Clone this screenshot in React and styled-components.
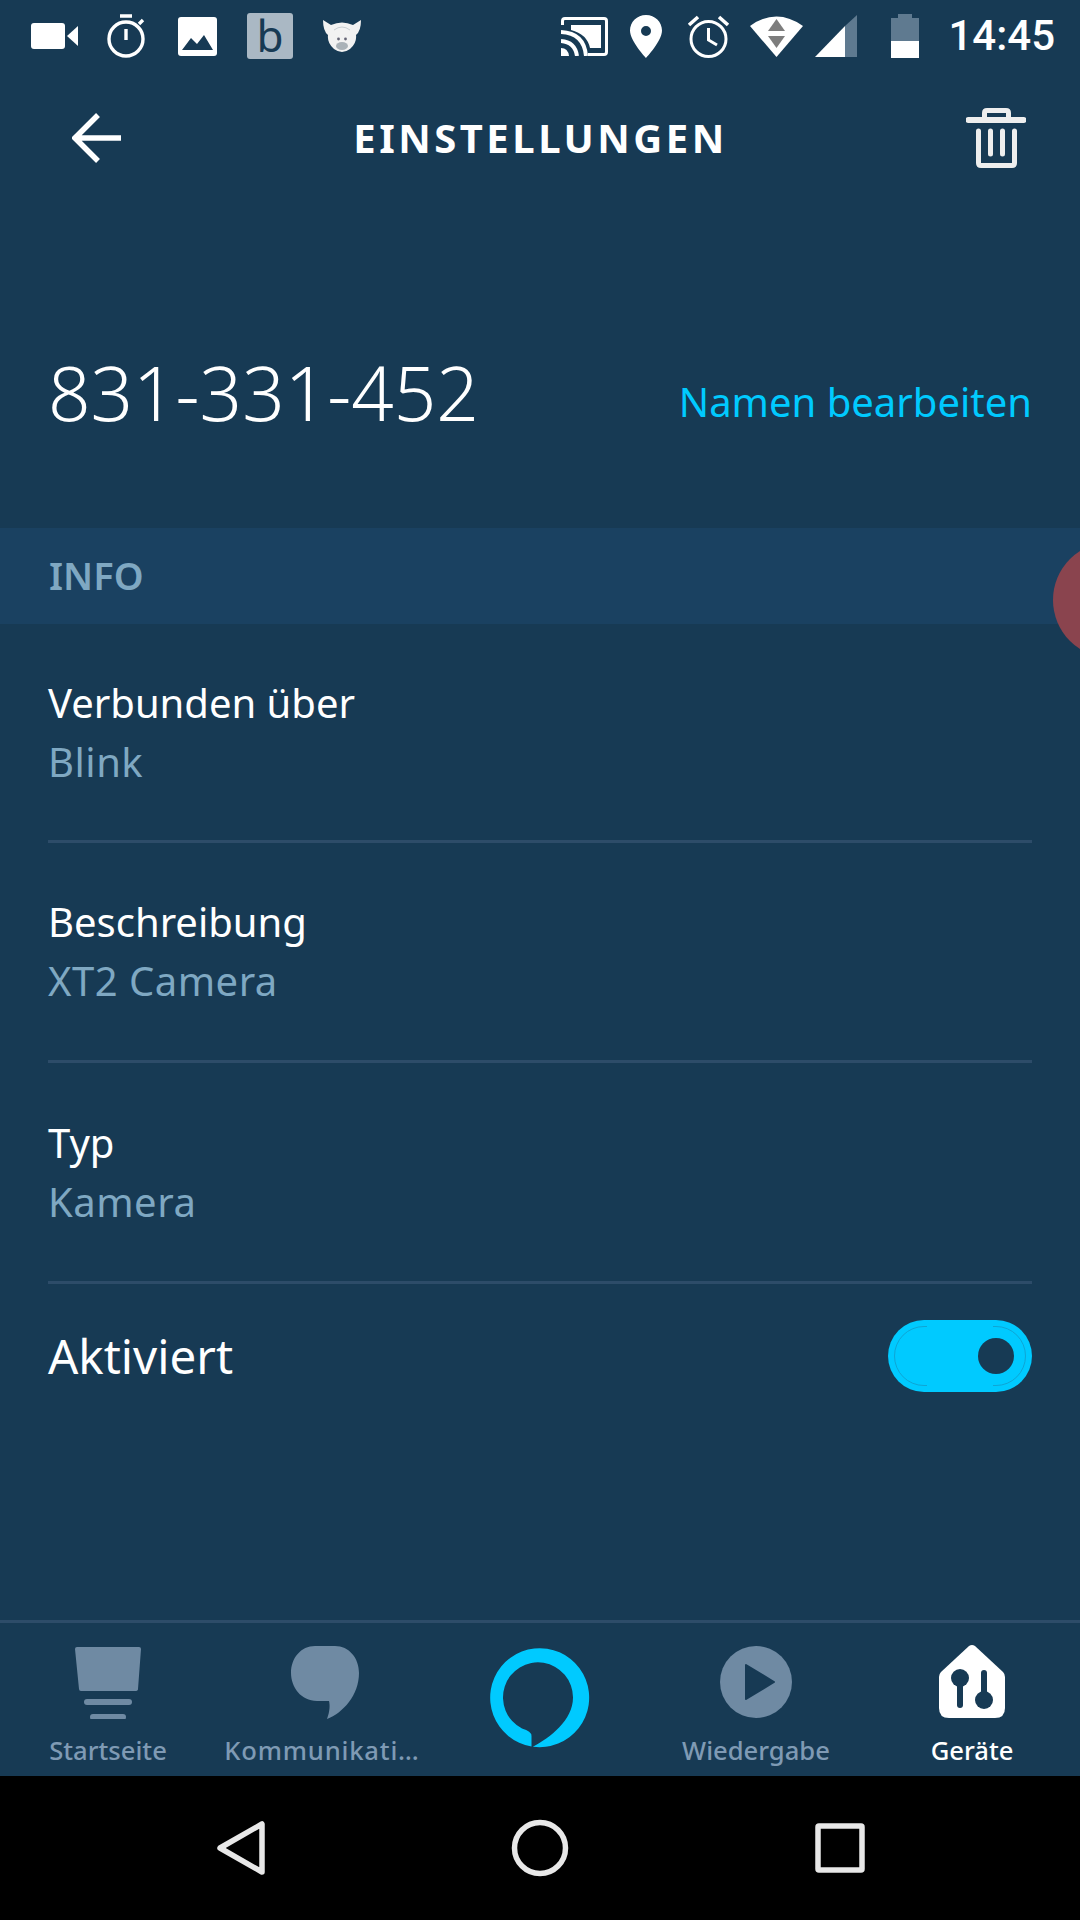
import React from 'react'
import styled, { createGlobalStyle } from 'styled-components'

const Global = createGlobalStyle`
  html, body { margin: 0; padding: 0; background: #173a54; }
  * { box-sizing: border-box; }
`;

const Screen = styled.div`
  position: relative;
  width: 1080px;
  height: 1920px;
  overflow: hidden;
  display: flex;
  flex-direction: column;
  background: #173a54;
  font-family: "Noto Sans", "Open Sans", sans-serif;
  color: #fff;
`;

const StatusBar = styled.div`
  height: 72px;
  flex: none;
  display: flex;
  align-items: center;
  justify-content: space-between;
  padding: 0 25px 0 31px;
`;

const StatusGroup = styled.div`
  display: flex;
  align-items: center;
`;

const StatusIcon = styled.svg`
  display: block;
  flex: none;
  width: ${p => p.$w}px;
  height: ${p => p.$h}px;
  margin-left: ${p => p.$ml || 0}px;
`;

const BadgeB = styled.span`
  flex: none;
  width: 46px;
  height: 46px;
  margin-left: 30px;
  border-radius: 3px;
  background: #aab8c4;
  color: #173a54;
  font-size: 44px;
  line-height: 44px;
  text-align: center;
`;

const Clock = styled.span`
  font-family: Roboto, sans-serif;
  font-size: 42px;
  font-weight: 500;
  margin-left: 29px;
  line-height: 1;
`;

const Toolbar = styled.header`
  height: 132px;
  flex: none;
  display: flex;
  align-items: center;
  justify-content: space-between;
  padding: 0 54px 0 72px;
`;

const Title = styled.h1`
  margin: 0 7px 2px 0;
  font-size: 40px;
  font-weight: 700;
  letter-spacing: 3.5px;
`;

const NameRow = styled.div`
  height: 324px;
  flex: none;
  display: flex;
  align-items: center;
  justify-content: space-between;
  padding: 51px 48px 0;
`;

const DeviceName = styled.div`
  font-size: 74.5px;
  font-weight: 300;
`;

const EditLink = styled.a`
  font-size: 40px;
  color: #00caff;
  margin-top: 19px;
`;

const SectionHead = styled.div`
  height: 96px;
  flex: none;
  display: flex;
  align-items: center;
  padding: 0 0 2px 49px;
  background: #1a4161;
  color: #7fa8c2;
  font-size: 38px;
  font-weight: 600;
`;

const InfoRow = styled.div`
  margin: 0 48px;
  height: ${p => p.$h}px;
  flex: none;
  display: flex;
  flex-direction: column;
  justify-content: center;
  border-bottom: 3px solid #2d4c69;
  padding-bottom: 1px;
`;

const Label = styled.div`
  font-size: 40px;
  line-height: 59px;
`;

const Value = styled.div`
  font-size: 40px;
  line-height: 59px;
  letter-spacing: 0.5px;
  color: #7fa8c2;
`;

const ToggleRow = styled.div`
  margin: 0 48px;
  height: 144px;
  flex: none;
  display: flex;
  align-items: center;
  justify-content: space-between;
`;

const ToggleLabel = styled.div`
  font-size: 47.5px;
  margin-bottom: 2px;
`;

const Toggle = styled.div`
  position: relative;
  width: 144px;
  height: 72px;
  border-radius: 36px;
  background: #00caff;
  &::before {
    content: '';
    position: absolute;
    inset: 6px;
    border-radius: 30px;
    border: 1px solid #0fa5d4;
    clip-path: polygon(0 0, 25% 0, 25% 100%, 75% 100%, 75% 0, 100% 0, 100% 100%, 0 100%);
  }
`;

const Knob = styled.span`
  position: absolute;
  right: 18px;
  top: 18px;
  width: 36px;
  height: 36px;
  border-radius: 50%;
  background: #173a54;
`;

const Spacer = styled.div`
  flex: 1;
`;

const TabBar = styled.nav`
  height: 156px;
  flex: none;
  display: grid;
  grid-template-columns: repeat(5, 1fr);
  border-top: 3px solid #2d4c69;
`;

const Tab = styled.div`
  display: flex;
  flex-direction: column;
  align-items: center;
  padding-top: ${p => (p.$center ? 17 : 22)}px;
  color: ${p => (p.$active ? '#fff' : '#7f9ab4')};
  font-size: 25.6px;
  font-weight: 500;
  white-space: nowrap;
`;

const TabIcon = styled.svg`
  display: block;
  width: 72px;
  height: 74px;
  flex: none;
`;

const AlexaIcon = styled.svg`
  display: block;
  width: 120px;
  height: 120px;
`;

const TabLabel = styled.span`
  line-height: 36px;
  margin-top: 14px;
  margin-right: ${p => (p.$spaced ? 4 : 0)}px;
  letter-spacing: ${p => (p.$spaced ? 0.8 : 0)}px;
`;

const NavBar = styled.div`
  height: 144px;
  flex: none;
  background: #000;
  display: flex;
  align-items: center;
  justify-content: center;
  gap: 236px;
`;

const NavIcon = styled.svg`
  display: block;
  width: 64px;
  height: 64px;
  fill: none;
  stroke: #e8e8e8;
  stroke-width: 5.5;
  stroke-linejoin: round;
`;

const RecordDot = styled.div`
  position: absolute;
  left: 1053px;
  top: 542px;
  width: 116px;
  height: 116px;
  border-radius: 50%;
  background: #8a444e;
`;

const rows = [
  ['Verbunden über', 'Blink', 219],
  ['Beschreibung', 'XT2 Camera', 220],
  ['Typ', 'Kamera', 221],
];

export default function App() {
  return (
    <Screen>
      <Global />
      <StatusBar>
        <StatusGroup>
          <StatusIcon $w={47} $h={26} viewBox="0 0 47 26" fill="#fff">
            <rect x="0" y="0" width="34" height="26" rx="3" />
            <path d="M36 13 L47 3 V23 Z" />
          </StatusIcon>
          <StatusIcon $w={40} $h={44} $ml={28} viewBox="0 0 40 44" fill="none" stroke="#fff" strokeWidth="3.4">
            <circle cx="20" cy="25" r="17" />
            <path d="M14 2 H26 M20 15 V26 M33 10 L37 6" />
          </StatusIcon>
          <StatusIcon $w={39} $h={39} $ml={32} viewBox="0 0 39 39">
            <rect width="39" height="39" rx="3" fill="#fff" />
            <path d="M4 33 L13 21 L19 27 L26 18 L35 33 Z" fill="#173a54" />
          </StatusIcon>
          <BadgeB>b</BadgeB>
          <StatusIcon $w={38} $h={34} $ml={30} viewBox="0 0 38 34">
            <path d="M0 1 L8 6 Q19 1 30 6 L38 1 Q38 12 33 16 Q34 24 27 30 Q19 36 11 30 Q4 24 5 16 Q0 12 0 1 Z" fill="#f2f2f2" />
            <ellipse cx="19" cy="27" rx="6" ry="4" fill="#aab2b8" />
            <circle cx="15.5" cy="20" r="1.4" fill="#667" />
            <circle cx="22.5" cy="20" r="1.4" fill="#667" />
            <path d="M11 11 Q19 5 27 11" fill="none" stroke="#c8ced2" strokeWidth="1" />
          </StatusIcon>
        </StatusGroup>
        <StatusGroup>
          <StatusIcon $w={47} $h={39} viewBox="0 0 47 39" fill="none" stroke="#fff" strokeWidth="3">
            <path d="M1.5 8 V4 Q1.5 1.5 4 1.5 H43 Q45.5 1.5 45.5 4 V35 Q45.5 37.5 43 37.5 H27" />
            <path d="M10 8 H40 V31 H29 Q26 17 10 13 Z" fill="#fff" stroke="none" />
            <path d="M0 15 Q23 16 25 39 M0 24 Q14 25 16 39" strokeWidth="4" />
            <path d="M0 31 Q7 31 8 39 H0 Z" fill="#fff" stroke="none" />
          </StatusIcon>
          <StatusIcon $w={32} $h={43} $ml={22} viewBox="0 0 32 43">
            <path fillRule="evenodd" d="M16 0 C7 0 0 7 0 15.5 C0 26 16 43 16 43 C16 43 32 26 32 15.5 C32 7 25 0 16 0 Z M16 11 A5 5 0 1 1 16 21 A5 5 0 1 1 16 11 Z" fill="#fff" />
          </StatusIcon>
          <StatusIcon $w={43} $h={44} $ml={25} viewBox="0 0 43 44" fill="none" stroke="#fff" strokeWidth="3">
            <circle cx="21.5" cy="25" r="17.5" />
            <path d="M21.5 14 V26 L30 31" />
            <path d="M2 11 L11 3 M41 11 L32 3" strokeWidth="3.6" />
          </StatusIcon>
          <StatusIcon $w={53} $h={42} $ml={20} viewBox="0 0 53 42">
            <path d="M0 11 Q26.5 -8 53 11 L26.5 42 Z" fill="#fff" />
            <path d="M26.5 4 L35 16 H18 Z" fill="#7d7d7d" />
            <path d="M26.5 33 L18 21 H35 Z" fill="#7d7d7d" />
          </StatusIcon>
          <StatusIcon $w={42} $h={42} $ml={12} viewBox="0 0 42 42">
            <path d="M0 42 L30 11 V42 Z" fill="#fff" />
            <path d="M30 11 L42 0 V42 H30 Z" fill="#5f7a90" />
          </StatusIcon>
          <StatusIcon $w={28} $h={44} $ml={34} viewBox="0 0 28 44">
            <path d="M0 4 H7 V0 H21 V4 H28 V27 H0 Z" fill="#5f7a90" />
            <rect x="0" y="27" width="28" height="17" fill="#fff" />
          </StatusIcon>
          <Clock>14:45</Clock>
        </StatusGroup>
      </StatusBar>

      <Toolbar>
        <svg width="50" height="50" viewBox="0 0 50 50" fill="none" stroke="#fff" strokeWidth="5.5">
          <path d="M49 25 H4 M26 2 L3 25 L26 48" />
        </svg>
        <Title>EINSTELLUNGEN</Title>
        <svg width="60" height="62" viewBox="0 0 60 62" fill="none" stroke="#eeeeee" strokeWidth="5" strokeLinecap="round" strokeLinejoin="round">
          <path d="M2.5 13 H57.5" strokeWidth="6" />
          <path d="M18.5 11 V6 Q18.5 3.5 21 3.5 H40 Q42.5 3.5 42.5 6 V11" strokeLinecap="butt" />
          <path d="M12.5 24 V56 Q12.5 58.5 15 58.5 H46 Q48.5 58.5 48.5 56 V24" />
          <path d="M24.5 24 V47 M36.5 24 V47" />
        </svg>
      </Toolbar>

      <NameRow>
        <DeviceName>831-331-452</DeviceName>
        <EditLink>Namen bearbeiten</EditLink>
      </NameRow>

      <SectionHead>INFO</SectionHead>

      {rows.map(([label, value, h]) => (
        <InfoRow key={label} $h={h}>
          <Label>{label}</Label>
          <Value>{value}</Value>
        </InfoRow>
      ))}

      <ToggleRow>
        <ToggleLabel>Aktiviert</ToggleLabel>
        <Toggle><Knob /></Toggle>
      </ToggleRow>

      <Spacer />

      <TabBar>
        <Tab>
          <TabIcon viewBox="0 0 72 74" fill="#6f8aa3">
            <path d="M5 2 H67 Q69 2 69 4 L66 44 Q66 46 63 46 H9 Q7 46 7 44 L3 4 Q3 2 5 2 Z" />
            <rect x="12" y="54" width="48" height="6" rx="3" />
            <rect x="18" y="69" width="36" height="6" rx="3" />
          </TabIcon>
          <TabLabel>Startseite</TabLabel>
        </Tab>
        <Tab>
          <TabIcon viewBox="0 0 72 74" fill="#6f8aa3">
            <path d="M27 1 H47 C61 1 71 13 71 28 C71 50 55 68 39 74 C42 66 42 60 41 56 H29 C13 56 3 42 3 28 C3 13 13 1 27 1 Z" />
          </TabIcon>
          <TabLabel $spaced>Kommunikati…</TabLabel>
        </Tab>
        <Tab $center>
          <AlexaIcon viewBox="2 2 120 120">
            <path d="M53.5 108.5 A49.5 49.5 0 1 1 54.8 108.7 C72 100 95 82 95 59.5 A35 35 0 1 0 44 90.5 Q53.5 93 53.5 98 Z" fill="#00caff" />
          </AlexaIcon>
        </Tab>
        <Tab>
          <TabIcon viewBox="0 0 72 74">
            <circle cx="36" cy="37" r="36" fill="#6f8aa3" />
            <path d="M26 20 L54 37 L26 54 Z" fill="#173a54" stroke="#173a54" strokeWidth="2" strokeLinejoin="round" />
          </TabIcon>
          <TabLabel>Wiedergabe</TabLabel>
        </Tab>
        <Tab $active>
          <TabIcon viewBox="0 0 72 74">
            <path d="M33 1 Q36 -1 39 1 L67 27 Q69 29 69 32 V63 Q69 73 59 73 H13 Q3 73 3 63 V32 Q3 29 5 27 Z" fill="#fff" />
            <circle cx="24" cy="33" r="9" fill="#173a54" />
            <rect x="21" y="33" width="6" height="30" rx="3" fill="#173a54" />
            <circle cx="48" cy="55" r="9" fill="#173a54" />
            <rect x="45" y="25" width="6" height="30" rx="3" fill="#173a54" />
          </TabIcon>
          <TabLabel>Geräte</TabLabel>
        </Tab>
      </TabBar>

      <NavBar>
        <NavIcon viewBox="0 0 64 64"><path d="M12 32 L54 8 V56 Z" /></NavIcon>
        <NavIcon viewBox="0 0 64 64"><circle cx="32" cy="32" r="25.5" /></NavIcon>
        <NavIcon viewBox="0 0 64 64"><rect x="10" y="10" width="44" height="44" rx="1" /></NavIcon>
      </NavBar>

      <RecordDot />
    </Screen>
  )
}
